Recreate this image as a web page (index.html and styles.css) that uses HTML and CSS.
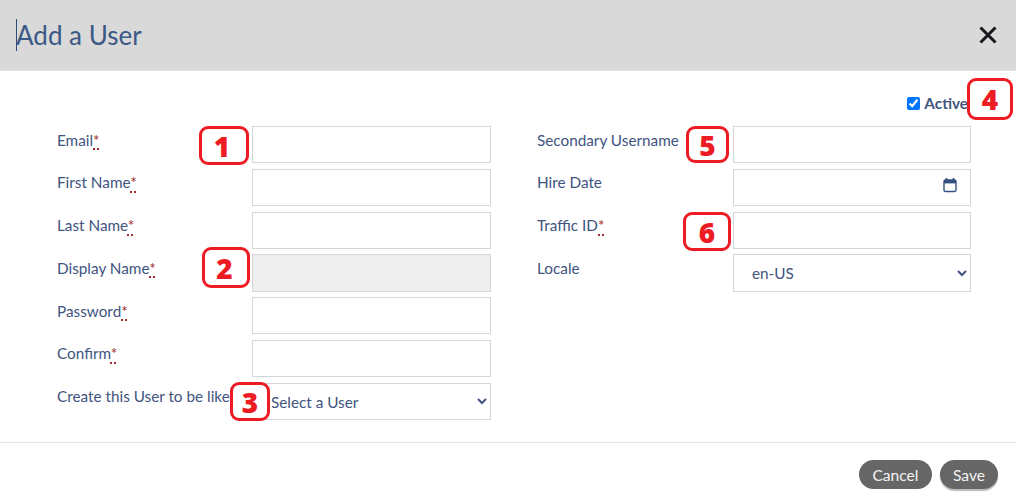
FILE: index.html
```html
<!DOCTYPE html>
<html lang="en">
<head>
<meta charset="utf-8">
<title>Add a User</title>
<link rel="stylesheet" href="styles.css">
</head>
<body>
<div class="modal">
  <header class="modal-header">
    <h1 class="modal-title"><span class="caret"></span>Add a User</h1>
    <button class="close" type="button" aria-label="Close">
      <svg viewBox="0 0 18 18" width="18" height="18"><path d="M1.5 1.5 L16.5 16.5 M16.5 1.5 L1.5 16.5" fill="none" stroke="#16181d" stroke-width="3"/></svg>
    </button>
  </header>
  <main class="modal-body">
    <div class="active-row">
      <label class="active"><input type="checkbox" checked>Active</label>
    </div>
    <div class="columns">
      <div class="column column-left">
        <div class="field"><label>Email<abbr>*</abbr></label><input class="control" type="text"></div>
        <div class="field"><label>First Name<abbr>*</abbr></label><input class="control" type="text"></div>
        <div class="field"><label>Last Name<abbr>*</abbr></label><input class="control" type="text"></div>
        <div class="field"><label>Display Name<abbr>*</abbr></label><input class="control disabled" type="text" disabled></div>
        <div class="field"><label>Password<abbr>*</abbr></label><input class="control" type="password"></div>
        <div class="field"><label>Confirm<abbr>*</abbr></label><input class="control" type="password"></div>
        <div class="field"><label>Create this User to be like</label><select class="control select"><option>Select a User</option></select></div>
      </div>
      <div class="column column-right">
        <div class="field"><label>Secondary Username</label><input class="control" type="text"></div>
        <div class="field"><label>Hire Date</label>
          <div class="date-wrap">
            <input class="control" type="text">
            <svg class="date-icon" viewBox="0 0 14 16" width="14" height="16"><path d="M3.5 1v3M10.5 1v3" stroke="#34507f" stroke-width="1.6" fill="none"/><rect x="1" y="3" width="12" height="11.5" rx="1.4" fill="#fff" stroke="#34507f" stroke-width="1.4"/><rect x="1" y="3" width="12" height="3.4" fill="#34507f"/></svg>
          </div>
        </div>
        <div class="field"><label>Traffic ID<abbr>*</abbr></label><input class="control" type="text"></div>
        <div class="field"><label>Locale</label><select class="control select"><option>en-US</option></select></div>
      </div>
    </div>
  </main>
  <footer class="modal-footer">
    <button class="btn" type="button">Cancel</button>
    <button class="btn btn-save" type="button">Save</button>
  </footer>
  <span class="badge b1">1</span>
  <span class="badge b2">2</span>
  <span class="badge b3">3</span>
  <span class="badge b4">4</span>
  <span class="badge b5">5</span>
  <span class="badge b6">6</span>
</div>
</body>
</html>
```
FILE: styles.css
```css
* { box-sizing: border-box; }
html, body { margin: 0; padding: 0; height: 100%; background: #fff; overflow: hidden; }
body { font-family: Lato, "Open Sans", sans-serif; font-size: 15.3px; color: #3f5480; }
.modal { position: relative; width: 1016px; height: 500px; }
.modal-header {
  height: 71px;
  background: #d9d9d9;
  border-bottom: 1px solid #e3e3e3;
  display: flex;
  align-items: center;
  justify-content: space-between;
  padding: 0 19px 0 16px;
}
.modal-title { margin: 0; font-size: 26px; font-weight: 400; color: #3b5886; display: flex; align-items: center; line-height: 32px; }
.caret { width: 1px; height: 32px; background: #2f4b7c; margin-right: -1px; }
.close { border: 0; background: none; padding: 0; width: 18px; height: 18px; display: block; }
.close svg { display: block; }
.modal-body { height: 372px; border-bottom: 1px solid #e5e5e5; padding: 0 45px 0 57px; }
.active-row { height: 55px; padding: 25px 3px 0 0; display: flex; justify-content: flex-end; }
.active { display: flex; align-items: center; height: 14px; font-weight: 700; }
.active input { margin: 0 4px 0 0; width: 13px; height: 13px; }
.columns { display: flex; gap: 46px; }
.column { display: flex; flex-direction: column; }
.column-left { width: 434px; }
.column-right { width: 434px; }
.field { display: flex; height: 42.75px; justify-content: space-between; }
.field label { padding-top: 4.5px; line-height: 18px; white-space: nowrap; }
.field abbr { color: #a12a2a; text-decoration: underline dotted #a12a2a 2px; text-underline-offset: 3px; }
.control {
  width: 239px;
  height: 37.33px;
  border: 1px solid #d6d6d6;
  background: #fff;
  padding: 0 13px;
  margin: 0;
  border-radius: 0;
  font: inherit;
  color: inherit;
  outline: none;
  display: block;
}
.column-right .control { width: 238px; }
.disabled { background: #eeeeee; }
.select { padding: 1px 0 0 14px; }
.select option { color: #3f5480; }
.date-wrap { position: relative; }
.date-icon { position: absolute; right: 14px; top: 8px; }
.modal-footer { display: flex; justify-content: flex-end; gap: 8px; padding: 17px 18px 0 0; }
.btn {
  height: 29px;
  min-width: 58px;
  padding: 0 13.5px;
  border: 0;
  border-radius: 15px;
  background: #666;
  color: #f2f2f2;
  font: inherit;
  font-size: 15.6px;
}
.btn-save { padding: 0 13px; box-shadow: 0 2px 1px #bbb; }
.badge {
  position: absolute;
  display: flex;
  align-items: center;
  justify-content: center;
  border: 3px solid #ed1c24;
  border-radius: 9px;
  background: #fff;
  color: #ed1c24;
  font-family: "Open Sans", sans-serif;
  font-weight: 800;
  font-size: 28px;
  line-height: 1;
}
.b1 { left: 199px; top: 126px; width: 50px; height: 39px; padding-right: 4px; }
.b2 { left: 202px; top: 247px; width: 48px; height: 41px; padding-right: 3px; }
.b3 { left: 230px; top: 382px; width: 40px; height: 39px; }
.b4 { left: 967px; top: 78px; width: 46px; height: 42px; }
.b5 { left: 686px; top: 126px; width: 43px; height: 37px; }
.b6 { left: 683px; top: 212px; width: 48px; height: 39px; }
```
